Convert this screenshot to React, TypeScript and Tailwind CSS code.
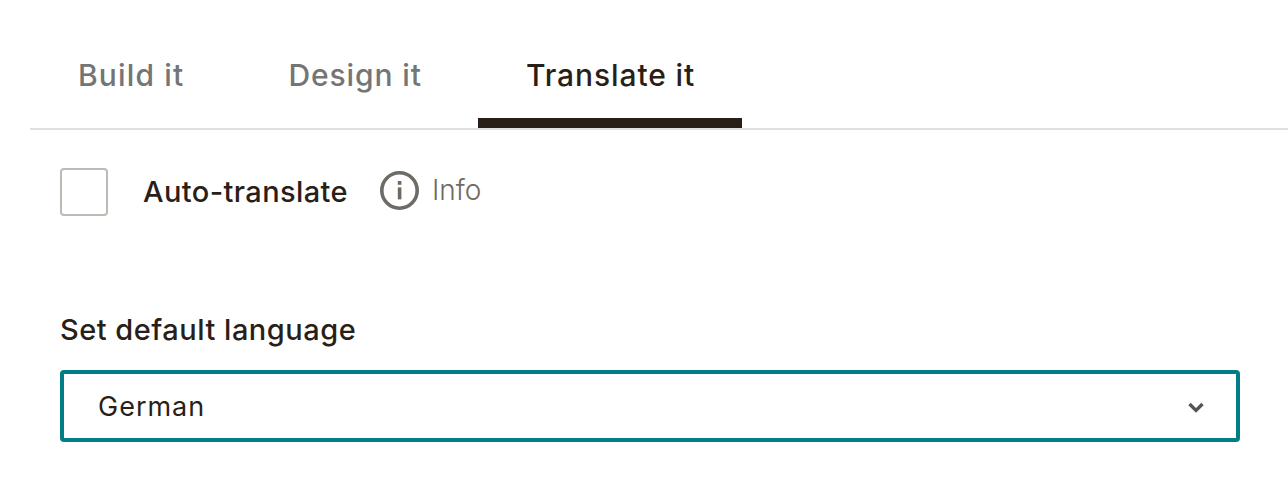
import React from "react";

function Tab({ label, active, className }: { label: string; active?: boolean; className: string }) {
  return (
    <div
      className={`h-[88px] pt-[16px] text-[30px] leading-[38px] font-medium whitespace-nowrap ${className} ${
        active ? "border-b-[10px] border-[#2a1f18] text-[#2a1f18]" : "text-[#757575]"
      }`}
    >
      {label}
    </div>
  );
}

export default function App() {
  return (
    <div className="w-[1288px] h-[500px] bg-white overflow-hidden pl-[30px] pt-[40px] font-['Inter',sans-serif]">
      <div className="flex h-[90px] border-b-2 border-[#e0e0e0]">
        <Tab label="Build it" className="px-[48px] tracking-[1.15px]" />
        <Tab label="Design it" className="ml-[8px] px-[48px] tracking-[0.9px]" />
        <Tab label="Translate it" active className="ml-[8px] pl-[48px] pr-[47px] tracking-[0.9px]" />
      </div>
      <div className="pl-[30px] pr-[48px]">
        <div className="flex items-center mt-[38px] h-[48px]">
          <div className="w-[48px] h-[48px] rounded-[4px] border-2 border-[#bfb9b3]" />
          <div className="ml-[35px] text-[29px] font-medium tracking-[0.4px] text-[#2a1f18]">Auto-translate</div>
          <svg className="ml-[32px] -mt-[4px]" width="39" height="39" viewBox="0 0 39 39" fill="none">
            <circle cx="19.5" cy="19.5" r="17.7" stroke="#6f6a64" strokeWidth="3.6" />
            <rect x="17.8" y="10" width="3.6" height="3.8" fill="#6f6a64" />
            <rect x="17.8" y="16.4" width="3.6" height="12" fill="#6f6a64" />
          </svg>
          <div className="ml-[13px] -mt-[4px] text-[28px] font-light text-[#6f6a64]">Info</div>
        </div>
        <div className="mt-[94px] text-[29px] leading-[40px] font-medium tracking-[0.5px] text-[#2a1f18]">Set default language</div>
        <div className="mt-[20px] h-[72px] flex items-center justify-between border-4 border-[#017d85] rounded-[4px] pl-[34px] pr-[32px]">
          <span className="mt-[2px] text-[27px] tracking-[1px] text-[#2a1f18]">German</span>
          <svg className="mt-[2px]" width="16" height="11" viewBox="0 0 16 11" fill="none">
            <path d="M1.5 2 L8 8.4 L14.5 2" stroke="#555555" strokeWidth="3.4" />
          </svg>
        </div>
      </div>
    </div>
  );
}
